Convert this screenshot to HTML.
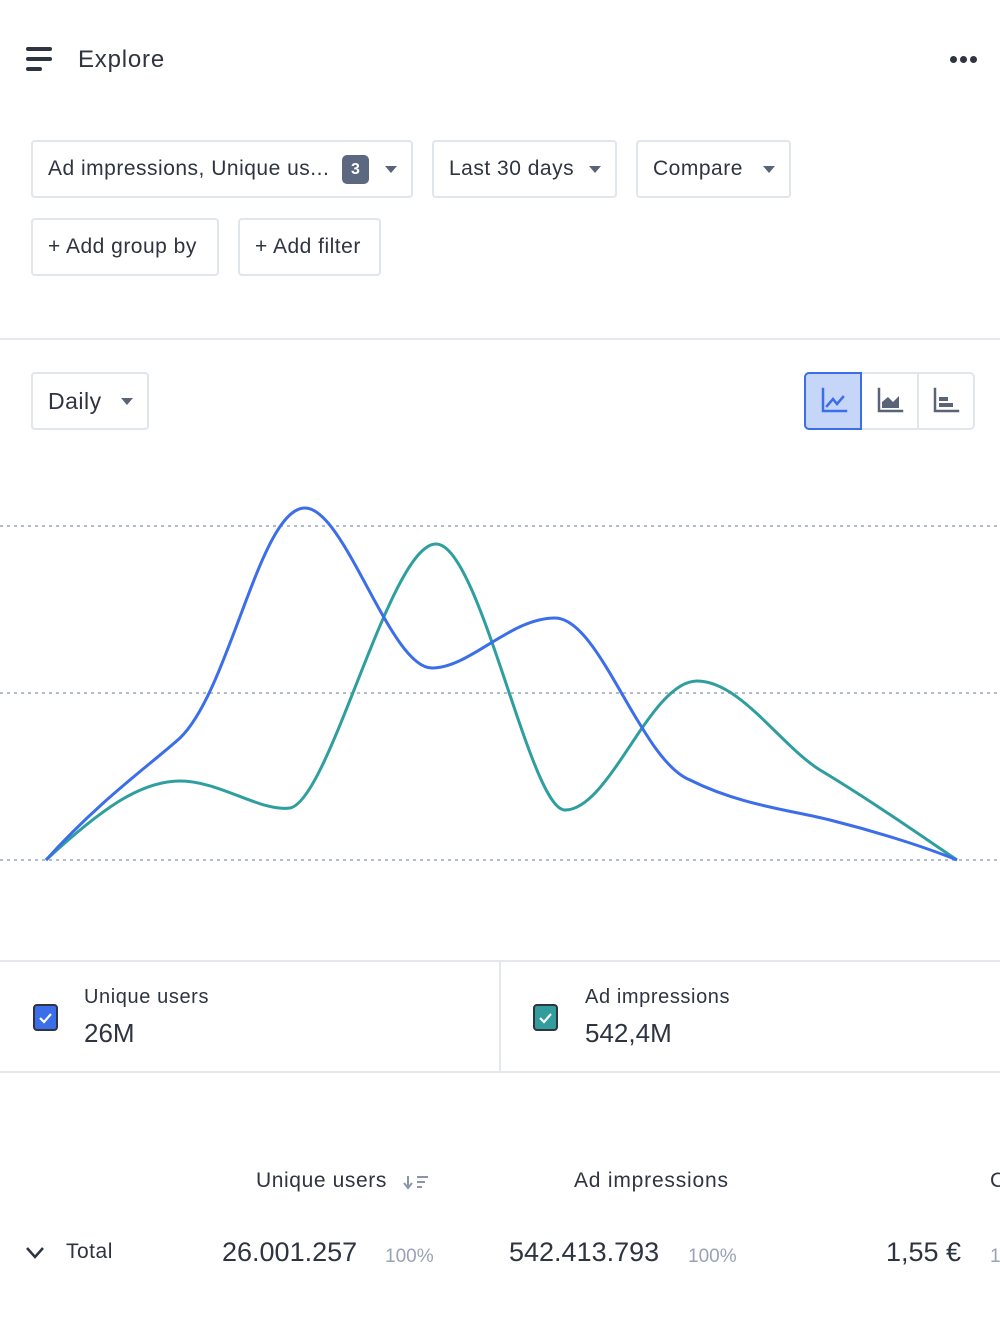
<!DOCTYPE html>
<html><head><meta charset="utf-8"><style>
*{box-sizing:border-box;margin:0;padding:0}
body{width:1000px;height:1334px;background:#fff;font-family:"Liberation Sans",sans-serif;color:#2e3440;position:relative;overflow:hidden}
.a{position:absolute}
.btn{position:absolute;border:2px solid #e1e5ec;border-radius:4px;background:#fff;font-size:21px;letter-spacing:0.5px;display:flex;align-items:center;padding-left:15px;white-space:nowrap}
.tri{position:absolute;width:0;height:0;border-left:6px solid transparent;border-right:6px solid transparent;border-top:7px solid #5a6478}
.hr{position:absolute;left:0;height:2px;background:#e4e7ec}
</style></head><body>
<div class="a" style="left:26px;top:47px;width:26px;height:4px;background:#2e3440;border-radius:2px"></div>
<div class="a" style="left:26px;top:57px;width:26px;height:4px;background:#2e3440;border-radius:2px"></div>
<div class="a" style="left:26px;top:67px;width:16px;height:4px;background:#2e3440;border-radius:2px"></div>
<div class="a" style="left:78px;top:46px;font-size:24px;letter-spacing:0.8px">Explore</div>
<div class="a" style="left:950px;top:56px;width:7px;height:7px;border-radius:50%;background:#2e3440;box-shadow:10px 0 #2e3440,20px 0 #2e3440"></div>

<div class="btn" style="left:31px;top:140px;width:382px;height:58px">Ad impressions, Unique us...</div>
<div class="a" style="left:342px;top:155px;width:27px;height:29px;background:#5b6880;border-radius:5px;color:#fff;font-size:16px;font-weight:bold;text-align:center;line-height:29px">3</div>
<div class="tri" style="left:385px;top:166px"></div>
<div class="btn" style="left:432px;top:140px;width:185px;height:58px">Last 30 days</div>
<div class="tri" style="left:589px;top:166px"></div>
<div class="btn" style="left:636px;top:140px;width:155px;height:58px">Compare</div>
<div class="tri" style="left:763px;top:166px"></div>
<div class="btn" style="left:31px;top:218px;width:188px;height:58px">+ Add group by</div>
<div class="btn" style="left:238px;top:218px;width:143px;height:58px">+ Add filter</div>

<div class="hr" style="top:338px;width:1000px"></div>

<div class="btn" style="left:31px;top:372px;width:118px;height:58px;font-size:23px">Daily</div>
<div class="tri" style="left:121px;top:398px"></div>

<div class="a" style="left:804px;top:372px;width:171px;height:58px;border:2px solid #e1e5ec;border-radius:5px"></div>
<div class="a" style="left:804px;top:372px;width:58px;height:58px;border:2px solid #3b6ee8;border-radius:5px 0 0 5px;background:#c6d6f8"></div>
<div class="a" style="left:917px;top:374px;width:2px;height:54px;background:#e1e5ec"></div>
<svg class="a" style="left:0;top:0" width="1000" height="1334">
<g fill="none" stroke-linecap="square">
<path d="M823,389 V411 H846" stroke="#3b6ee8" stroke-width="2.5"/>
<path d="M827,406 L833,399 L837,404 L843,397" stroke="#3b6ee8" stroke-width="2.5"/>
<path d="M879,389 V411 H902" stroke="#5a6478" stroke-width="2.5"/>
<path d="M935,389 V411 H958" stroke="#5a6478" stroke-width="2.5"/>
</g>
<path d="M882,408 V402 L888,397 L893,402 L899,396 V408Z" fill="#5a6478"/>
<rect x="939" y="397" width="9" height="4" fill="#5a6478"/>
<rect x="939" y="403" width="14" height="4" fill="#5a6478"/>
<g stroke="#9aa6b8" stroke-width="1.5" stroke-dasharray="3,4">
<line x1="0" y1="526" x2="1000" y2="526"/>
<line x1="0" y1="693" x2="1000" y2="693"/>
<line x1="0" y1="860" x2="1000" y2="860"/>
</g>
<path d="M46,860 C100,810 140,781 180,781 C220,781 260,812 290,808 C330,800 390,544 436,544 C480,544 530,810 565,810 C610,810 650,681 697,681 C740,681 780,745 820,770 C870,800 920,835 957,860" fill="none" stroke="#2e9e9e" stroke-width="3"/>
<path d="M46,860 C100,800 150,765 180,738 C230,690 260,508 305,508 C345,508 390,668 432,668 C470,668 510,618 555,618 C600,618 640,760 690,780 C740,805 790,810 830,820 C870,830 920,845 957,860" fill="none" stroke="#3b6ee8" stroke-width="3"/>
<path d="M408,1176 V1187 M404,1183 L408,1188 L412,1183 M417,1177 H428 M417,1182 H425 M417,1187 H422" stroke="#8a95a8" stroke-width="2" fill="none"/>
<path d="M27,1248 L35,1257 L43,1248" stroke="#2e3440" stroke-width="2.5" fill="none"/>
</svg>

<div class="hr" style="top:960px;width:1000px"></div>
<div class="hr" style="top:1071px;width:1000px"></div>
<div class="a" style="left:499px;top:961px;width:2px;height:111px;background:#e4e7ec"></div>
<div class="a" style="left:33px;top:1004px;width:25px;height:27px;border-radius:4px;background:#3b6ee8;border:2px solid #2e3440"></div>
<div class="a" style="left:533px;top:1004px;width:25px;height:27px;border-radius:4px;background:#339c9c;border:2px solid #2e3440"></div>
<svg class="a" style="left:33px;top:1004px" width="25" height="27"><path d="M7,14 L11,18 L18,10" stroke="#fff" stroke-width="2.2" fill="none"/></svg>
<svg class="a" style="left:533px;top:1004px" width="25" height="27"><path d="M7,14 L11,18 L18,10" stroke="#fff" stroke-width="2.2" fill="none"/></svg>
<div class="a" style="left:84px;top:986px;font-size:20px;letter-spacing:0.6px">Unique users</div>
<div class="a" style="left:84px;top:1018px;font-size:26px">26M</div>
<div class="a" style="left:585px;top:986px;font-size:20px;letter-spacing:0.6px">Ad impressions</div>
<div class="a" style="left:585px;top:1018px;font-size:26px">542,4M</div>

<div class="a" style="left:256px;top:1169px;font-size:21px;letter-spacing:0.6px">Unique users</div>
<div class="a" style="left:574px;top:1169px;font-size:21px;letter-spacing:0.8px">Ad impressions</div>
<div class="a" style="left:990px;top:1169px;font-size:21px">C</div>
<div class="a" style="left:66px;top:1240px;font-size:21px;letter-spacing:0.5px">Total</div>
<div class="a" style="left:222px;top:1237px;font-size:27px">26.001.257</div>
<div class="a" style="left:385px;top:1246px;font-size:19px;color:#97a3b6">100%</div>
<div class="a" style="left:509px;top:1237px;font-size:27px">542.413.793</div>
<div class="a" style="left:688px;top:1246px;font-size:19px;color:#97a3b6">100%</div>
<div class="a" style="left:886px;top:1237px;font-size:27px">1,55 €</div>
<div class="a" style="left:990px;top:1246px;font-size:19px;color:#97a3b6">1</div>
</body></html>
